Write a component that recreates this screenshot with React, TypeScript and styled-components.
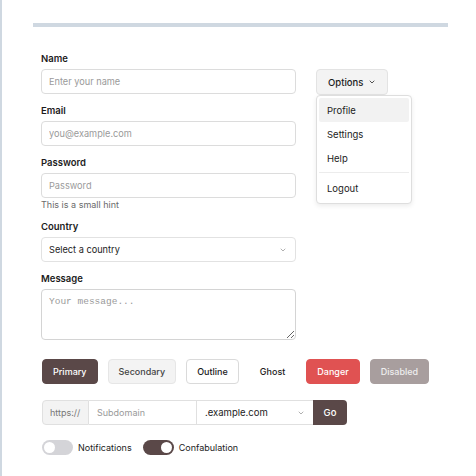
import styled, { createGlobalStyle } from 'styled-components'

const GlobalStyle = createGlobalStyle`
  html, body { margin: 0; padding: 0; background: #ffffff; }
  body { font-family: Inter, "Noto Sans", sans-serif; color: #1c1c1c; }
  * { box-sizing: border-box; }
`

const brown = '#5a4848'

const App = () => {
  return (
    <>
      <GlobalStyle />
      <Page>
        <TopBar />
        <Body>
          <FormColumn>
            <Field>
              <Label>Name</Label>
              <TextInput placeholder="Enter your name" />
            </Field>
            <Field>
              <Label>Email</Label>
              <TextInput placeholder="you@example.com" />
            </Field>
            <Field>
              <Label>Password</Label>
              <TextInput type="password" placeholder="Password" />
              <Hint>This is a small hint</Hint>
            </Field>
            <Field>
              <Label>Country</Label>
              <SelectBox>
                <span>Select a country</span>
                <Chevron color="#a0a0a0" />
              </SelectBox>
            </Field>
            <Field>
              <Label>Message</Label>
              <TextArea placeholder="Your message..." />
            </Field>
          </FormColumn>
          <MenuWrap>
            <OptionsButton>
              Options <Chevron color="#333" />
            </OptionsButton>
            <Menu>
              <MenuItem $active>Profile</MenuItem>
              <MenuItem>Settings</MenuItem>
              <MenuItem>Help</MenuItem>
              <MenuSep />
              <MenuItem>Logout</MenuItem>
            </Menu>
          </MenuWrap>
        </Body>
        <ButtonRow>
          <Button $variant="primary">Primary</Button>
          <Button $variant="secondary">Secondary</Button>
          <Button $variant="outline">Outline</Button>
          <Button $variant="ghost">Ghost</Button>
          <Button $variant="danger">Danger</Button>
          <Button $variant="disabled">Disabled</Button>
        </ButtonRow>
        <Group>
          <Addon>https://</Addon>
          <GroupInput placeholder="Subdomain" />
          <GroupSelect>
            <span>.example.com</span>
            <Chevron color="#a0a0a0" />
          </GroupSelect>
          <GoButton>Go</GoButton>
        </Group>
        <ToggleRow>
          <Toggle>
            <Track $on={false}><Knob /></Track>
            Notifications
          </Toggle>
          <Toggle>
            <Track $on><Knob /></Track>
            Confabulation
          </Toggle>
        </ToggleRow>
      </Page>
    </>
  )
}

const Chevron = ({ color }: { color: string }) => (
  <svg width="8" height="8" viewBox="0 0 24 24" fill="none" stroke={color} strokeWidth="2.5" strokeLinecap="round" strokeLinejoin="round">
    <path d="M6 9l6 6 6-6" />
  </svg>
)

const Page = styled.div`
  min-height: 476px;
  border-left: 2px solid #cfd8e1;
  padding: 23px 0 0 31px;
`
const TopBar = styled.div`
  width: 415px;
  height: 4px;
  background: #cfd8e1;
`
const Body = styled.div`
  display: flex;
  gap: 20px;
  padding-left: 8px;
  margin-top: 25px;
`
const FormColumn = styled.div`
  display: flex;
  flex-direction: column;
  gap: 10px;
  width: 255px;
`
const Field = styled.div`
  display: flex;
  flex-direction: column;
`
const Label = styled.label`
  font-size: 9.5px;
  font-weight: 600;
  line-height: 13px;
  margin-bottom: 4px;
  color: #1c1c1c;
`
const TextInput = styled.input`
  height: 25px;
  width: 100%;
  border: 1px solid #dcdcdc;
  border-radius: 4px;
  padding: 0 7px;
  font-family: Inter, sans-serif;
  font-size: 9.2px;
  color: #1c1c1c;
  outline: none;
  &::placeholder { color: #9a9a9a; }
`
const Hint = styled.div`
  font-size: 9px;
  color: #6b6b6b;
  line-height: 11px;
  margin-top: 1px;
`
const SelectBox = styled.div`
  height: 25px;
  border: 1px solid #e2e2e2;
  border-radius: 4px;
  padding: 0 8px 0 7px;
  display: flex;
  align-items: center;
  justify-content: space-between;
  font-size: 9.2px;
  color: #1c1c1c;
`
const TextArea = styled.textarea`
  height: 51px;
  width: 100%;
  border: 1px solid #d4d4d4;
  border-radius: 4px;
  padding: 6px 7px;
  font-family: "Liberation Mono", monospace;
  font-size: 9.5px;
  outline: none;
  &::placeholder { color: #9a9a9a; }
`
const MenuWrap = styled.div`
  position: relative;
  margin-top: 17px;
`
const OptionsButton = styled.button`
  height: 26px;
  padding: 0 11px;
  display: flex;
  align-items: center;
  gap: 5px;
  background: #f3f3f3;
  border: 1px solid #e3e3e3;
  border-radius: 4px;
  font-family: Inter, sans-serif;
  font-size: 9.5px;
  font-weight: 500;
  color: #1c1c1c;
`
const Menu = styled.div`
  position: absolute;
  top: 26px;
  left: 0;
  width: 96px;
  padding: 2px 2px 3px;
  background: #ffffff;
  border: 1px solid #dedede;
  border-radius: 4px;
  box-shadow: 0 2px 5px rgba(0, 0, 0, 0.08);
`
const MenuItem = styled.div<{ $active?: boolean }>`
  height: 24px;
  display: flex;
  align-items: center;
  padding: 0 8px;
  border-radius: 2px;
  font-size: 9.5px;
  color: #1c1c1c;
  background: ${p => (p.$active ? '#f2f2f2' : 'transparent')};
`
const MenuSep = styled.div`
  height: 1px;
  margin: 2px 0 3px;
  background: #ececec;
`
const ButtonRow = styled.div`
  display: flex;
  gap: 10px;
  padding-left: 9px;
  margin-top: 19px;
`
const variants: Record<string, string> = {
  primary: `background: ${brown}; color: #fff; border-color: ${brown};`,
  secondary: 'background: #f3f3f3; color: #444; border-color: #e6e6e6;',
  outline: 'background: #fff; color: #1c1c1c; border-color: #dadada;',
  ghost: 'background: transparent; color: #1c1c1c; border-color: transparent;',
  danger: 'background: #e05252; color: #fff; border-color: #e05252;',
  disabled: 'background: #a89e9e; color: #eee; border-color: #a89e9e;',
}
const Button = styled.button<{ $variant: string }>`
  height: 25px;
  padding: 0 10px;
  border: 1px solid;
  border-radius: 4px;
  font-family: Inter, sans-serif;
  font-size: 9px;
  font-weight: 500;
  ${p => variants[p.$variant]}
`
const Group = styled.div`
  display: flex;
  height: 25px;
  margin: 16px 0 0 9px;
`
const Addon = styled.div`
  width: 47px;
  display: flex;
  align-items: center;
  padding-left: 7px;
  background: #f3f3f3;
  border: 1px solid #e0e0e0;
  border-radius: 4px 0 0 4px;
  font-size: 9px;
  color: #777;
`
const GroupInput = styled.input`
  width: 108px;
  border: 1px solid #e0e0e0;
  border-left: none;
  padding: 0 8px;
  font-family: Inter, sans-serif;
  font-size: 9px;
  outline: none;
  &::placeholder { color: #9a9a9a; }
`
const GroupSelect = styled.div`
  width: 116px;
  display: flex;
  align-items: center;
  justify-content: space-between;
  padding: 0 8px;
  border: 1px solid #e0e0e0;
  border-left: none;
  border-right: none;
  font-size: 9.5px;
  color: #1c1c1c;
`
const GoButton = styled.button`
  width: 34px;
  background: ${brown};
  color: #fff;
  border: none;
  border-radius: 0 4px 4px 0;
  font-family: Inter, sans-serif;
  font-size: 9.5px;
  font-weight: 500;
`
const ToggleRow = styled.div`
  display: flex;
  gap: 11px;
  margin: 15px 0 0 9px;
`
const Toggle = styled.label`
  display: flex;
  align-items: center;
  gap: 5px;
  font-size: 9px;
  color: #1c1c1c;
`
const Track = styled.div<{ $on: boolean }>`
  width: 31px;
  height: 15px;
  border-radius: 8px;
  padding: 2px;
  display: flex;
  justify-content: ${p => (p.$on ? 'flex-end' : 'flex-start')};
  background: ${p => (p.$on ? brown : '#d4d4d8')};
`
const Knob = styled.div`
  width: 11px;
  height: 11px;
  border-radius: 50%;
  background: #fff;
`

export default App
